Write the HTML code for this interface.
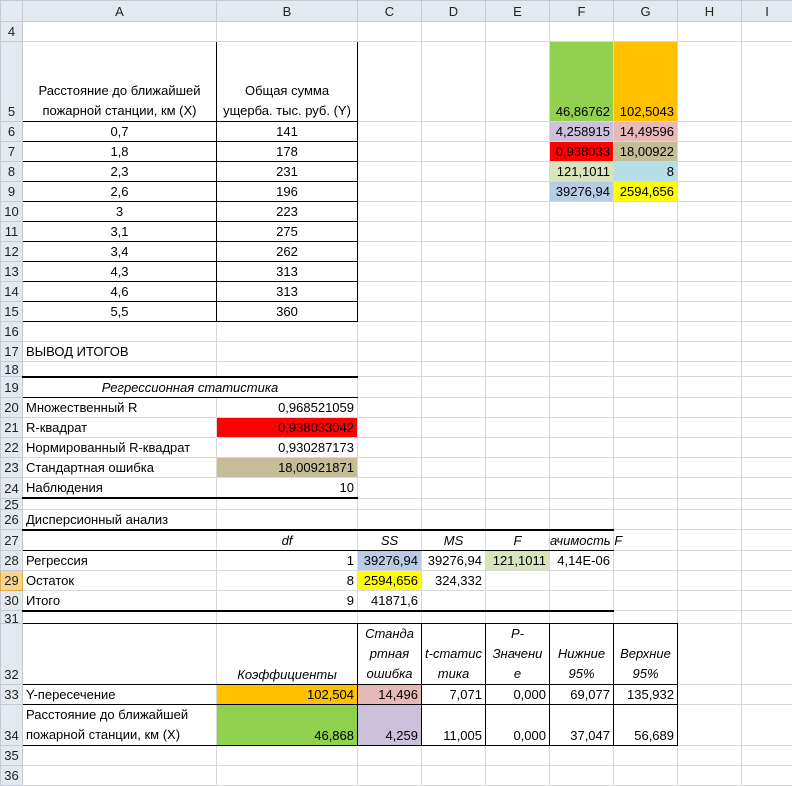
<!DOCTYPE html>
<html><head><meta charset="utf-8">
<style>
body{margin:0;background:#fff;width:792px;height:771px;overflow:hidden;font-family:"Liberation Sans",sans-serif;font-size:13px;color:#000}
table{border-collapse:collapse;table-layout:fixed;width:792px}
td{border:1px solid #d8d8d8;padding:0 3px;vertical-align:bottom;white-space:nowrap;overflow:hidden;line-height:19px}
td.h{background:#e4e8ef;border-color:#c5cbd6;color:#222;text-align:center;vertical-align:middle;padding:0}
td.rh{background:#e4e8ef;border-color:#c5cbd6;color:#222;text-align:center;padding:0;font-size:13px}
.r{text-align:right}.c{text-align:center}.i{font-style:italic}
.b{border:1px solid #000}
.tt{border-top:2px solid #000}.bb{border-bottom:2px solid #000}.bt{border-bottom:1px solid #000}
.wrap{white-space:normal;line-height:20px}
</style></head><body>
<table>
<col style="width:22px"><col style="width:194px"><col style="width:141px"><col style="width:64px"><col style="width:64px"><col style="width:64px"><col style="width:64px"><col style="width:64px"><col style="width:64px"><col style="width:51px">
<tr style="height:21px"><td class="h"></td><td class="h">A</td><td class="h">B</td><td class="h">C</td><td class="h">D</td><td class="h">E</td><td class="h">F</td><td class="h">G</td><td class="h">H</td><td class="h">I</td></tr>
<tr style="height:20px"><td class="rh">4</td><td></td><td></td><td></td><td></td><td></td><td></td><td></td><td></td><td></td></tr>
<tr style="height:80px"><td class="rh">5</td><td class="b c wrap">Расстояние до ближайшей пожарной станции, км (X)</td><td class="b c wrap">Общая сумма ущерба. тыс. руб. (Y)</td><td></td><td></td><td></td><td class="r" style="background:#92d050">46,86762</td><td class="r" style="background:#ffc000">102,5043</td><td></td><td></td></tr>
<tr style="height:20px"><td class="rh">6</td><td class="b c">0,7</td><td class="b c">141</td><td></td><td></td><td></td><td class="r" style="background:#ccc0da">4,258915</td><td class="r" style="background:#e6b8b7">14,49596</td><td></td><td></td></tr>
<tr style="height:20px"><td class="rh">7</td><td class="b c">1,8</td><td class="b c">178</td><td></td><td></td><td></td><td class="r" style="background:#ff0000">0,938033</td><td class="r" style="background:#c4bd97">18,00922</td><td></td><td></td></tr>
<tr style="height:20px"><td class="rh">8</td><td class="b c">2,3</td><td class="b c">231</td><td></td><td></td><td></td><td class="r" style="background:#d8e4bc">121,1011</td><td class="r" style="background:#b7dee8">8</td><td></td><td></td></tr>
<tr style="height:20px"><td class="rh">9</td><td class="b c">2,6</td><td class="b c">196</td><td></td><td></td><td></td><td class="r" style="background:#b8cce4">39276,94</td><td class="r" style="background:#ffff00">2594,656</td><td></td><td></td></tr>
<tr style="height:20px"><td class="rh">10</td><td class="b c">3</td><td class="b c">223</td><td></td><td></td><td></td><td></td><td></td><td></td><td></td></tr>
<tr style="height:20px"><td class="rh">11</td><td class="b c">3,1</td><td class="b c">275</td><td></td><td></td><td></td><td></td><td></td><td></td><td></td></tr>
<tr style="height:20px"><td class="rh">12</td><td class="b c">3,4</td><td class="b c">262</td><td></td><td></td><td></td><td></td><td></td><td></td><td></td></tr>
<tr style="height:20px"><td class="rh">13</td><td class="b c">4,3</td><td class="b c">313</td><td></td><td></td><td></td><td></td><td></td><td></td><td></td></tr>
<tr style="height:20px"><td class="rh">14</td><td class="b c">4,6</td><td class="b c">313</td><td></td><td></td><td></td><td></td><td></td><td></td><td></td></tr>
<tr style="height:20px"><td class="rh">15</td><td class="b c">5,5</td><td class="b c">360</td><td></td><td></td><td></td><td></td><td></td><td></td><td></td></tr>
<tr style="height:20px"><td class="rh">16</td><td></td><td></td><td></td><td></td><td></td><td></td><td></td><td></td><td></td></tr>
<tr style="height:20px"><td class="rh">17</td><td>ВЫВОД ИТОГОВ</td><td></td><td></td><td></td><td></td><td></td><td></td><td></td><td></td></tr>
<tr style="height:15px"><td class="rh" style="line-height:13px">18</td><td class="bb"></td><td class="bb"></td><td></td><td></td><td></td><td></td><td></td><td></td><td></td></tr>
<tr style="height:21px"><td class="rh">19</td><td colspan="2" class="c i bt">Регрессионная статистика</td><td></td><td></td><td></td><td></td><td></td><td></td><td></td></tr>
<tr style="height:20px"><td class="rh">20</td><td>Множественный R</td><td class="r">0,968521059</td><td></td><td></td><td></td><td></td><td></td><td></td><td></td></tr>
<tr style="height:20px"><td class="rh">21</td><td>R-квадрат</td><td class="r" style="background:#ff0000">0,938033042</td><td></td><td></td><td></td><td></td><td></td><td></td><td></td></tr>
<tr style="height:20px"><td class="rh">22</td><td>Нормированный R-квадрат</td><td class="r">0,930287173</td><td></td><td></td><td></td><td></td><td></td><td></td><td></td></tr>
<tr style="height:20px"><td class="rh">23</td><td>Стандартная ошибка</td><td class="r" style="background:#c4bd97">18,00921871</td><td></td><td></td><td></td><td></td><td></td><td></td><td></td></tr>
<tr style="height:20px"><td class="rh">24</td><td class="bb">Наблюдения</td><td class="r bb">10</td><td></td><td></td><td></td><td></td><td></td><td></td><td></td></tr>
<tr style="height:11px"><td class="rh" style="line-height:9px">25</td><td></td><td></td><td></td><td></td><td></td><td></td><td></td><td></td><td></td></tr>
<tr style="height:20px"><td class="rh">26</td><td class="bb">Дисперсионный анализ</td><td class="bb"></td><td class="bb"></td><td class="bb"></td><td class="bb"></td><td class="bb"></td><td></td><td></td><td></td></tr>
<tr style="height:20px"><td class="rh">27</td><td class="bt"></td><td class="bt c i">df</td><td class="bt c i">SS</td><td class="bt c i">MS</td><td class="bt c i">F</td><td class="bt i" style="overflow:visible;padding:0">ачимость F</td><td></td><td></td><td></td></tr>
<tr style="height:20px"><td class="rh">28</td><td>Регрессия</td><td class="r">1</td><td class="r" style="background:#b8cce4">39276,94</td><td class="r">39276,94</td><td class="r" style="background:#d8e4bc">121,1011</td><td class="r">4,14E-06</td><td></td><td></td><td></td></tr>
<tr style="height:20px"><td class="rh" style="background:#f9d48c;border-color:#e0a94a">29</td><td>Остаток</td><td class="r">8</td><td class="r" style="background:#ffff00">2594,656</td><td class="r">324,332</td><td></td><td></td><td></td><td></td><td></td></tr>
<tr style="height:20px"><td class="rh">30</td><td class="bb">Итого</td><td class="r bb">9</td><td class="r bb">41871,6</td><td class="bb"></td><td class="bb"></td><td class="bb"></td><td></td><td></td><td></td></tr>
<tr style="height:13px"><td class="rh" style="line-height:9px">31</td><td class="bt"></td><td class="bt"></td><td class="bt"></td><td class="bt"></td><td class="bt"></td><td class="bt"></td><td class="bt"></td><td></td><td></td></tr>
<tr style="height:60px"><td class="rh">32</td><td class="bt"></td><td class="b c i">Коэффициенты</td><td class="b c i wrap">Станда ртная ошибка</td><td class="b c i wrap">t-статис тика</td><td class="b c i wrap">P-Значени е</td><td class="b c i wrap">Нижние 95%</td><td class="b c i wrap">Верхние 95%</td><td></td><td></td></tr>
<tr style="height:20px"><td class="rh">33</td><td class="bt">Y-пересечение</td><td class="b r" style="background:#ffc000">102,504</td><td class="b r" style="background:#e6b8b7">14,496</td><td class="b r">7,071</td><td class="b r">0,000</td><td class="b r">69,077</td><td class="b r">135,932</td><td></td><td></td></tr>
<tr style="height:40px"><td class="rh">34</td><td class="bt wrap">Расстояние до ближайшей пожарной станции, км (X)</td><td class="b r" style="background:#92d050">46,868</td><td class="b r" style="background:#ccc0da">4,259</td><td class="b r">11,005</td><td class="b r">0,000</td><td class="b r">37,047</td><td class="b r">56,689</td><td></td><td></td></tr>
<tr style="height:20px"><td class="rh">35</td><td></td><td></td><td></td><td></td><td></td><td></td><td></td><td></td><td></td></tr>
<tr style="height:20px"><td class="rh">36</td><td></td><td></td><td></td><td></td><td></td><td></td><td></td><td></td><td></td></tr>
</table>
</body></html>
